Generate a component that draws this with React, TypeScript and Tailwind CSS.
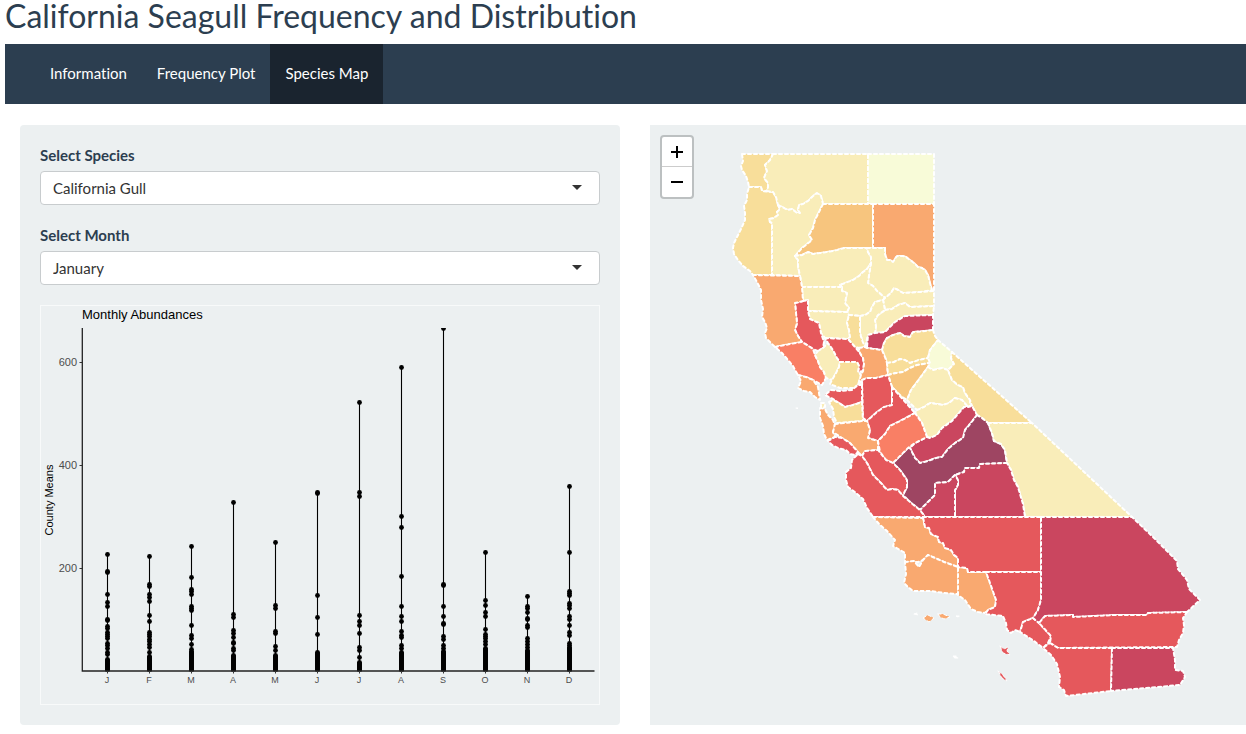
import { useState } from "react";

const PALE = "#f9edb9";
const LIGHT = "#f8fbd8";
const SAND = "#f8de9a";
const GOLD = "#f7c57e";
const ORANGE = "#f9a970";
const CORAL = "#f97f65";
const RED = "#e5585c";
const CRIMSON = "#ca465f";
const PLUM = "#9e4562";

type County = { name: string; fill: string; points: string; island?: boolean };

const counties: County[] = [
  { name: "Del Norte", fill: SAND, points: "742,154 773,154 770,160 765,165 767,171 764,178 768,183 768,187 767,191 762,191 761,187 749,187 748,182 746,176 742,170 741,166 743,161" },
  { name: "Humboldt", fill: SAND, points: "749,187 761,187 762,191 773,192 776,197 778,205 780,209 777,212 778,215 774,218 769,219 770,222 772,223 772,275 753,275 750,271 743,266 738,260 734,254 733,248 734,243 737,237 741,229 745,220 745,213 744,206 747,200 747,194" },
  { name: "Siskiyou", fill: PALE, points: "773,154 868,154 868,204 823,204 822,200 821,196 817,193 813,196 808,201 803,204 799,205 798,210 800,213 797,213 792,209 788,210 778,205 776,197 773,192 767,191 768,187 768,183 764,178 767,171 765,165 770,160" },
  { name: "Modoc", fill: LIGHT, points: "868,154 934,154 934,204 868,204" },
  { name: "Trinity", fill: PALE, points: "778,205 788,210 792,209 797,213 800,213 798,210 799,205 803,204 808,201 813,196 817,193 821,196 822,200 823,204 821,208 819,212 815,220 813,228 809,235 812,240 806,245 802,248 795,256 798,260 798,266 800,276 772,275 772,223 770,222 769,219 774,218 778,215 777,212 780,209" },
  { name: "Shasta", fill: GOLD, points: "823,204 873,204 873,248 850,248 844,248 837,250 833,251 827,252 820,253 813,254 808,252 802,255 795,256 802,248 806,245 812,240 809,235 813,228 815,220 819,212 821,208" },
  { name: "Lassen", fill: ORANGE, points: "873,204 934,204 934,290 932,290 930,283 928,275 925,270 922,268 918,267 914,263 910,260 906,257 903,256 897,256 893,262 890,260 887,260 885,254 885,248 873,248" },
  { name: "Tehama", fill: PALE, points: "795,256 802,255 808,252 813,254 820,253 827,252 833,251 837,250 844,248 850,248 867,248 868,252 871,257 871,263 867,269 863,272 859,276 853,280 845,283 840,285 842,287 802,287 800,276 798,266 798,260" },
  { name: "Plumas", fill: PALE, points: "867,248 885,248 885,254 887,260 890,260 893,262 897,256 903,256 906,257 910,260 914,263 918,267 922,268 925,270 928,275 930,283 932,290 920,292 903,293 898,290 894,288 891,293 885,298 877,291 873,286 868,283 869,275 871,263 871,257 868,252" },
  { name: "Butte", fill: PALE, points: "871,263 869,275 868,283 873,286 877,291 885,298 883,300 875,302 872,307 870,312 865,315 860,316 849,315 847,312 849,308 845,303 847,293 842,291 842,287 840,285 845,283 853,280 859,276 863,272 867,269" },
  { name: "Glenn", fill: PALE, points: "802,287 842,287 842,291 847,293 845,303 849,308 847,312 808,311 808,300 803,301" },
  { name: "Colusa", fill: PALE, points: "808,311 847,312 849,315 847,323 849,330 850,337 848,339 825,338 821,333 819,323 814,321 810,319" },
  { name: "Sierra", fill: PALE, points: "883,300 885,298 891,293 894,288 898,290 903,293 920,292 934,291 934,306 910,307 905,303 898,305 892,309 885,310" },
  { name: "Nevada", fill: PALE, points: "885,310 892,309 898,305 905,303 910,307 934,306 933,315 905,316 895,322 890,327 885,332 875,333 876,327 875,320 878,315" },
  { name: "Yuba", fill: PALE, points: "860,316 865,315 870,312 872,307 875,302 883,300 885,310 878,315 875,320 876,327 875,333 868,335 865,347 859,348 862,340 860,333" },
  { name: "Sutter", fill: SAND, points: "849,315 860,316 860,333 862,340 865,347 859,348 855,347 848,339 850,337 849,330 847,323" },
  { name: "Placer", fill: CRIMSON, points: "933,315 933,330 925,331 913,332 910,337 904,336 900,333 893,335 887,338 884,343 882,350 867,348 868,335 875,333 885,332 890,327 895,322 905,316" },
  { name: "El Dorado", fill: SAND, points: "933,330 935,336 938,340 934,345 930,350 928,358 919,360 910,363 905,360 900,359 894,362 887,363 885,357 882,350 884,343 887,338 893,335 900,333 904,336 910,337 913,332 925,331" },
  { name: "Lake", fill: RED, points: "803,301 808,300 808,311 810,319 814,321 819,323 821,333 824,342 823,348 818,351 813,349 807,345 802,342 798,336 795,330 797,323 796,313 795,303" },
  { name: "Mendocino", fill: ORANGE, points: "753,275 800,276 802,287 803,301 795,303 796,313 797,323 795,330 798,336 802,342 790,344 775,347 770,342 766,338 765,333 767,328 765,322 762,317 763,309 761,300 761,290 757,282" },
  { name: "Sonoma", fill: CORAL, points: "775,347 790,344 802,342 807,345 813,349 815,355 818,361 820,367 824,372 826,378 822,385 813,380 806,377 798,375 795,370 793,366 788,360 782,353" },
  { name: "Marin", fill: ORANGE, points: "798,375 806,377 813,380 818,387 819,393 820,400 815,397 810,392 804,391 798,388 801,381" },
  { name: "Napa", fill: PALE, points: "818,351 823,348 828,343 833,350 837,358 840,362 839,367 836,373 832,380 826,378 824,372 820,367 818,361 815,355" },
  { name: "Yolo", fill: RED, points: "825,338 848,339 855,347 860,353 863,358 864,364 863,371 858,372 859,366 857,362 840,362 837,358 833,350 828,343" },
  { name: "Solano", fill: SAND, points: "840,362 857,362 859,366 858,372 861,375 858,385 853,388 840,388 835,386 830,384 832,380 836,373 839,367" },
  { name: "Sacramento", fill: ORANGE, points: "859,348 865,347 867,348 882,350 885,357 887,363 888,375 876,378 867,378 862,380 858,385 861,375 863,371 864,364 863,358 860,353" },
  { name: "Amador", fill: SAND, points: "887,363 894,362 900,359 905,360 910,363 919,360 928,358 930,363 917,365 910,368 903,372 896,373 888,375" },
  { name: "Calaveras", fill: GOLD, points: "888,375 896,373 903,372 910,368 917,365 930,363 928,367 920,378 911,390 907,400 902,397 896,391 892,387" },
  { name: "Alpine", fill: LIGHT, points: "938,340 945,346 952,352 951,358 954,364 948,370 942,368 933,370 928,367 930,363 928,358 930,350 934,345" },
  { name: "Tuolumne", fill: PALE, points: "928,367 933,370 942,368 948,370 952,380 958,385 963,387 965,393 970,400 970,406 968,407 962,400 955,398 949,403 943,405 937,404 930,403 924,407 917,410 907,400 911,390 920,378" },
  { name: "Mono", fill: SAND, points: "952,352 1032,423 988,423 982,418 977,415 972,406 970,400 965,393 963,387 958,385 952,380 948,370 954,364 951,358" },
  { name: "Mariposa", fill: PALE, points: "917,410 924,407 930,403 937,404 943,405 949,403 955,398 962,400 968,407 964,407 958,414 952,421 942,428 937,435 930,438 927,437 922,423 915,413" },
  { name: "Madera", fill: CRIMSON, points: "927,437 930,438 937,435 942,428 952,421 958,414 964,407 968,407 972,406 977,415 970,424 965,430 963,438 955,443 948,449 942,457 936,458 928,461 920,463 915,458 910,448 915,443" },
  { name: "Fresno", fill: PLUM, points: "977,415 982,418 988,423 992,433 994,441 1001,444 1005,450 1007,463 980,464 979,468 965,468 964,472 955,475 948,482 935,483 935,495 928,502 920,510 910,502 903,495 907,487 907,480 900,470 893,463 908,448 910,448 915,458 920,463 928,461 936,458 942,457 948,449 955,443 963,438 965,430 970,424" },
  { name: "Inyo", fill: PALE, points: "988,423 1032,423 1132,517 1025,517 1023,504 1020,494 1018,487 1014,480 1011,470 1007,463 1005,450 1001,444 994,441 992,433" },
  { name: "Tulare", fill: CRIMSON, points: "1007,463 980,464 979,468 965,468 964,472 955,475 958,480 958,485 955,490 955,517 1025,517 1023,504 1020,494 1018,487 1014,480 1011,470" },
  { name: "Kings", fill: CRIMSON, points: "955,475 948,482 935,483 935,495 928,502 920,510 925,517 955,517 955,490 958,485 958,480" },
  { name: "San Joaquin", fill: RED, points: "862,380 867,378 876,378 888,375 892,387 892,405 884,407 877,412 867,421 863,418" },
  { name: "Stanislaus", fill: RED, points: "892,387 915,413 902,420 890,426 885,434 878,441 868,438 870,430 867,421 877,412 884,407 892,405" },
  { name: "Merced", fill: CORAL, points: "915,413 922,423 927,437 915,443 908,448 893,463 886,460 880,452 878,441 885,434 890,426 902,420" },
  { name: "Contra Costa", fill: RED, points: "862,385 862,402 853,405 845,407 839,403 833,399 825,395 831,390 840,391 852,390 858,385" },
  { name: "Alameda", fill: SAND, points: "829,402 833,400 839,403 845,407 853,405 862,402 863,421 837,423 834,417 833,409" },
  { name: "San Mateo", fill: ORANGE, points: "820,408 825,409 828,415 833,420 835,426 833,432 835,437 827,440 824,434 823,426 820,418" },
  { name: "Santa Clara", fill: ORANGE, points: "835,424 863,421 867,421 870,430 868,438 878,441 878,450 865,451 862,456 858,452 850,443 842,438 833,432" },
  { name: "Santa Cruz", fill: RED, points: "828,441 835,437 842,438 850,443 858,452 855,455 850,454 846,450 838,448 832,445" },
  { name: "San Benito", fill: RED, points: "862,456 865,451 878,450 886,460 893,463 900,470 907,480 907,487 903,495 902,495 898,490 893,489 887,490 880,482 873,475 867,463" },
  { name: "Monterey", fill: RED, points: "858,454 862,456 867,463 873,475 880,482 887,490 893,489 898,490 902,495 910,502 920,510 925,517 873,517 867,508 863,499 856,493 848,487 846,480 846,472 851,468 852,460" },
  { name: "San Luis Obispo", fill: ORANGE, points: "873,517 923,518 925,527 929,528 931,534 938,537 939,542 943,543 945,548 951,550 954,555 958,558 958,567 944,562 935,558 928,555 923,560 918,562 905,562 905,553 893,546 895,540 887,531 880,525" },
  { name: "Santa Barbara", fill: ORANGE, points: "905,562 914,561 919,567 923,560 928,555 935,558 944,562 958,567 958,594 944,593 931,591 913,591 908,587 904,583 906,574" },
  { name: "Ventura", fill: ORANGE, points: "958,567 967,568 968,572 986,572 990,583 996,600 995,607 988,610 985,613 978,612 971,609 965,600 958,595" },
  { name: "Kern", fill: RED, points: "923,517 1041,517 1041,572 968,572 967,568 958,567 958,558 954,555 951,550 945,548 943,543 939,542 938,537 931,534 929,528 925,527" },
  { name: "Los Angeles", fill: RED, points: "986,572 1041,572 1041,600 1038,610 1033,618 1023,622 1020,632 1015,630 1011,633 1007,630 1006,623 1003,616 985,614 988,610 995,607 996,600 990,583" },
  { name: "Orange", fill: RED, points: "1033,618 1039,623 1051,636 1048,643 1043,648 1034,641 1020,632 1023,622" },
  { name: "San Bernardino", fill: CRIMSON, points: "1041,517 1132,517 1152,536 1177,561 1178,569 1183,575 1187,580 1189,589 1200,600 1187,612 1148,613 1147,615 1115,615 1073,617 1073,615 1045,616 1039,623 1033,618 1038,610 1041,600" },
  { name: "Riverside", fill: RED, points: "1187,612 1183,618 1184,625 1183,633 1179,640 1177,647 1058,648 1050,643 1051,636 1039,623 1045,616 1073,615 1073,617 1115,615 1147,615 1148,613" },
  { name: "San Diego", fill: RED, points: "1050,643 1058,648 1112,648 1111,691 1066,696 1064,690 1059,687 1060,677 1057,664 1051,655 1043,648" },
  { name: "Imperial", fill: CRIMSON, points: "1112,648 1173,648 1175,660 1175,670 1183,671 1185,677 1180,685 1111,691" },
  { name: "San Francisco", fill: PALE, points: "821,403 825,403 825,407 821,408" },
  { name: "Santa Rosa Island", fill: ORANGE, island: true, points: "923,618 928,615 934,618 929,622 926,620" },
  { name: "Santa Cruz Island", fill: ORANGE, island: true, points: "938,614 943,614 950,617 944,619 940,617" },
  { name: "San Miguel Island", fill: "#fff", island: true, points: "914,614 917,613 918,615" },
  { name: "Anacapa Island", fill: "#fff", island: true, points: "956,616 960,616 958,617" },
  { name: "San Nicolas Island", fill: "#fff", island: true, points: "953,656 956,656 958,658 954,658" },
  { name: "Santa Catalina Island", fill: RED, island: true, points: "1000,646 1004,649 1008,647 1007,651 1010,655 1003,653" },
  { name: "San Clemente Island", fill: RED, island: true, points: "998,671 1003,675 1007,681 1002,678" },
  { name: "Farallon Islands", fill: "#fff", island: true, points: "796,408 798,408 797,409" },
];

type Month = { label: string; x: number; dots: number[]; denseFrom: number };

const months: Month[] = [
  { label: "J", x: 107, dots: [554, 571, 572, 594, 602, 606, 619, 620, 626, 628, 632, 634, 636, 638, 643, 645, 648, 652, 654], denseFrom: 659 },
  { label: "F", x: 149, dots: [556, 584, 586, 594, 597, 601, 615, 621, 632, 634, 636, 639, 641, 644, 647, 652], denseFrom: 656 },
  { label: "M", x: 191, dots: [546, 577, 589, 591, 594, 606, 608, 610, 625, 635, 638, 644, 649], denseFrom: 651 },
  { label: "A", x: 233, dots: [502, 614, 617, 630, 633, 637, 642, 643, 648, 650], denseFrom: 655 },
  { label: "M", x: 275, dots: [542, 605, 608, 631, 633, 646, 650], denseFrom: 655 },
  { label: "J", x: 317, dots: [492, 493, 595, 617, 634], denseFrom: 652 },
  { label: "J", x: 359, dots: [402, 492, 496, 615, 621, 625, 633, 647, 650, 657], denseFrom: 662 },
  { label: "A", x: 401, dots: [367, 516, 527, 576, 606, 616, 621, 631, 635, 637, 645, 648], denseFrom: 652 },
  { label: "S", x: 443, dots: [328, 584, 585, 606, 616, 623, 624, 636, 639, 645, 648], denseFrom: 651 },
  { label: "O", x: 485, dots: [552, 600, 605, 612, 616, 629, 634, 636, 638, 641, 644], denseFrom: 648 },
  { label: "N", x: 527, dots: [596, 606, 608, 612, 618, 619, 625, 627, 638, 641, 644, 647], denseFrom: 650 },
  { label: "D", x: 569, dots: [486, 552, 591, 593, 595, 603, 605, 608, 616, 619, 625, 632, 635, 643, 645], denseFrom: 647 },
];

const BASELINE = 671;

function denseDots(from: number): number[] {
  const ys: number[] = [];
  for (let y = from; y < BASELINE; y += 1) ys.push(y);
  return ys;
}

function AbundanceChart() {
  return (
    <svg
      viewBox="40 305 560 400"
      className="block h-auto w-full"
      role="img"
      aria-label="Monthly Abundances"
      fontFamily='"Liberation Sans", Arial, sans-serif'
    >
      <defs>
        <clipPath id="plot-area">
          <rect x="82" y="328" width="513" height="343.5" />
        </clipPath>
      </defs>
      <rect x="40.5" y="305.5" width="559" height="399" fill="none" stroke="#f8fafa" />
      <text x="82" y="319" fontSize="13" fill="#000">Monthly Abundances</text>
      <text x="53" y="500" fontSize="11" fill="#000" textAnchor="middle" transform="rotate(-90 53 500)">
        County Means
      </text>
      {[
        { value: 600, y: 362 },
        { value: 400, y: 465 },
        { value: 200, y: 568 },
      ].map((tick) => (
        <g key={tick.value}>
          <text x="77" y={tick.y + 4} fontSize="11" fill="#4d4d4d" textAnchor="end">{tick.value}</text>
          <path d={`M79.500 ${tick.y + 0.5}H82`} stroke="#333" />
        </g>
      ))}
      <g clipPath="url(#plot-area)">
        {months.map((m, i) => (
          <g key={i}>
            <path d={`M${m.x + 0.5} ${m.dots[0]}V${BASELINE}`} stroke="#000" strokeWidth="1.100" />
            {[...m.dots, ...denseDots(m.denseFrom)].map((y, j) => (
              <circle key={j} cx={m.x + 0.5} cy={y + 0.5} r="2.400" fill="#000" />
            ))}
          </g>
        ))}
      </g>
      <path d={`M82.300 328V${BASELINE}H594.500`} fill="none" stroke="#222" strokeWidth="1.300" />
      {months.map((m, i) => (
        <g key={i}>
          <path d={`M${m.x + 0.5} ${BASELINE}v2.500`} stroke="#333" />
          <text x={m.x} y="683" fontSize="9" fill="#4d4d4d" textAnchor="middle">{m.label}</text>
        </g>
      ))}
    </svg>
  );
}

function CountyMap() {
  return (
    <svg
      viewBox="650 125 596 600"
      preserveAspectRatio="xMinYMin meet"
      className="block h-full w-full"
      role="img"
      aria-label="California counties"
    >
      {counties.map((c) => (
        <polygon
          key={c.name}
          points={c.points}
          fill={c.fill}
          stroke="#fff"
          strokeWidth={c.island ? 1 : 2}
          strokeDasharray="3"
          strokeLinejoin="round"
          strokeLinecap="round"
        />
      ))}
    </svg>
  );
}

function Dropdown({
  id,
  label,
  options,
  value,
  onChange,
}: {
  id: string;
  label: string;
  options: string[];
  value: string;
  onChange: (value: string) => void;
}) {
  return (
    <div className="mb-5">
      <label htmlFor={id} className="mb-[5px] block text-[15px] leading-[21px] font-bold">
        {label}
      </label>
      <div className="relative">
        <select
          id={id}
          value={value}
          onChange={(e) => onChange(e.target.value)}
          className="block h-[34px] w-full appearance-none rounded border border-[#c8ccce] bg-white px-3 text-[15px] text-[#333]"
        >
          {options.map((o) => (
            <option key={o}>{o}</option>
          ))}
        </select>
        <svg viewBox="0 0 10 5" className="pointer-events-none absolute top-3.5 right-[18px] h-[5px] w-2.5" aria-hidden="true">
          <path d="M0 0H10L5 5Z" fill="#333" />
        </svg>
      </div>
    </div>
  );
}

const tabs = ["Information", "Frequency Plot", "Species Map"];

export default function App() {
  const [species, setSpecies] = useState("California Gull");
  const [month, setMonth] = useState("January");
  return (
    <div className="min-h-screen bg-white pb-2 pl-[5px] font-['Lato',sans-serif] text-[#2c3e50] [font-variant-ligatures:none]">
      <h1 className="h-11 text-[32px] leading-8">California Seagull Frequency and Distribution</h1>
      <nav className="flex h-[60px] bg-[#2c3e50] pl-[30px]">
        {tabs.map((t) => (
          <a
            key={t}
            href="#"
            aria-current={t === "Species Map" ? "page" : undefined}
            className={
              t === "Species Map"
                ? "flex items-center bg-[#1a242f] px-[15px] pb-0.5 text-[15px] text-white"
                : "flex items-center px-[15px] pb-0.5 text-[15px] text-white"
            }
          >
            {t}
          </a>
        ))}
      </nav>
      <main className="mt-[21px] grid grid-cols-[600fr_596fr] gap-[30px] pl-[15px]">
        <section className="rounded bg-[#ecf0f1] p-5">
          <Dropdown
            id="species"
            label="Select Species"
            options={["California Gull", "Western Gull", "Ring-billed Gull"]}
            value={species}
            onChange={setSpecies}
          />
          <Dropdown
            id="month"
            label="Select Month"
            options={["January", "February", "March", "April", "May", "June", "July", "August", "September", "October", "November", "December"]}
            value={month}
            onChange={setMonth}
          />
          <AbundanceChart />
        </section>
        <section className="relative bg-[#ecf0f1]">
          <CountyMap />
          <div className="absolute top-2.5 left-2.5 flex flex-col overflow-hidden rounded border-2 border-[#bcc0c1] bg-white">
            <button type="button" aria-label="Zoom in" className="flex h-[30px] w-[30px] items-center justify-center border-b border-[#ccc]">
              <svg viewBox="0 0 14 14" className="size-3.5" aria-hidden="true">
                <path d="M1 7H13M7 1V13" stroke="#000" strokeWidth="2" />
              </svg>
            </button>
            <button type="button" aria-label="Zoom out" className="flex h-[30px] w-[30px] items-center justify-center">
              <svg viewBox="0 0 14 14" className="size-3.5" aria-hidden="true">
                <path d="M1 7H13" stroke="#000" strokeWidth="2" />
              </svg>
            </button>
          </div>
        </section>
      </main>
    </div>
  );
}
